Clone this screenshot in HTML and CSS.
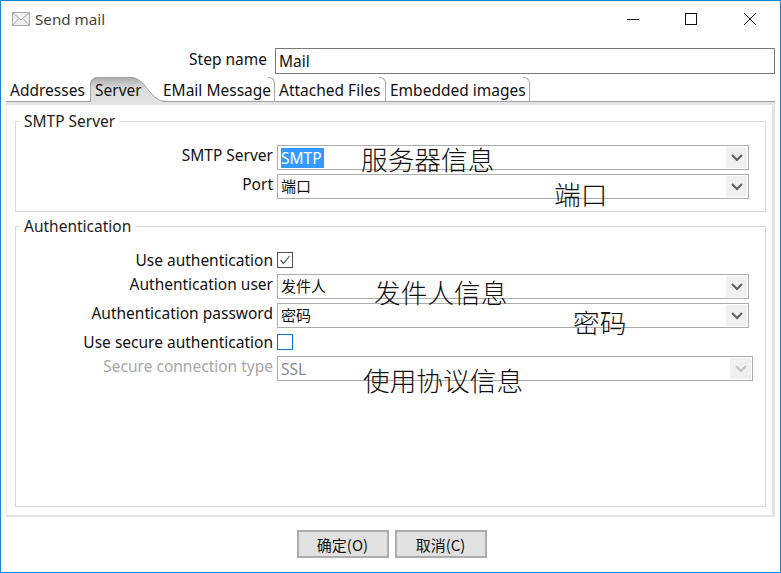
FILE: index.html
```html
<!DOCTYPE html>
<html lang="en">

<head>
    <meta charset="UTF-8">
    <title>Send mail</title>
    <link rel="stylesheet" href="styles.css">
</head>

<body>
    <div class="window">
        <div class="titlebar">
            <svg class="mail-icon" width="18" height="14" viewBox="0 0 18 14">
                <rect x="0.5" y="0.5" width="17" height="13" fill="#f0f0f0" stroke="#a8a8a8" />
                <path d="M1 1l8 7 8-7M1 13l6-6.5M17 13l-6-6.5" fill="none" stroke="#a8a8a8" />
            </svg>
            <span class="title-text">Send mail</span>
            <div class="controls">
                <svg width="12" height="12" viewBox="0 0 12 12">
                    <path d="M0 6.5h12" stroke="#111" />
                </svg>
                <svg width="12" height="12" viewBox="0 0 12 12">
                    <rect x="0.5" y="0.5" width="11" height="11" fill="none" stroke="#111" />
                </svg>
                <svg class="close-icon" width="12" height="12" viewBox="0 0 12 12">
                    <path d="M0 0l12 12M12 0l-12 12" stroke="#111" />
                </svg>
            </div>
        </div>

        <div class="step-row">
            <span class="step-label">Step name</span>
            <div class="step-input">Mail</div>
        </div>

        <div class="tabs">
            <span class="tab tab-first">Addresses</span>
            <span class="tab tab-active">
                <svg class="tab-shape" width="80" height="26" viewBox="0 0 80 26">
                    <defs>
                        <linearGradient id="tabfill" x1="0" y1="0" x2="0" y2="1">
                            <stop offset="0" stop-color="#a9a9a9" />
                            <stop offset="0.45" stop-color="#dcdcdc" />
                            <stop offset="1" stop-color="#e3e3e3" />
                        </linearGradient>
                    </defs>
                    <path d="M0 26V9C0 3 3 0 9 0H40C50 0 54 8 60 15C66 22 70 25 78 25V26Z" fill="url(#tabfill)" />
                    <path d="M0.5 25V9C0.5 3 3 0.5 9 0.5H40C50 0.5 54 8 60 15C66 22 70 24.5 78 24.5" fill="none" stroke="#a0a0a0" />
                </svg>
                <span class="tab-label">Server</span>
            </span>
            <span class="tab tab-curved tab-email">EMail Message</span>
            <span class="tab tab-curved tab-attached">Attached Files</span>
            <span class="tab tab-curved tab-embedded">Embedded images</span>
        </div>

        <div class="panel">
            <fieldset class="group group-smtp">
                <legend>SMTP Server</legend>
                <div class="row">
                    <label>SMTP Server</label>
                    <div class="combo">
                        <span class="selected">SMTP</span>
                        <span class="arrow"><svg width="12" height="8" viewBox="0 0 12 8"><path d="M1 1l5 5 5-5" fill="none" stroke="#606060" stroke-width="2" /></svg></span>
                    </div>
                </div>
                <div class="row">
                    <label>Port</label>
                    <div class="combo">
                        <span class="value-cjk">端口</span>
                        <span class="arrow"><svg width="12" height="8" viewBox="0 0 12 8"><path d="M1 1l5 5 5-5" fill="none" stroke="#606060" stroke-width="2" /></svg></span>
                    </div>
                </div>
            </fieldset>

            <fieldset class="group group-auth">
                <legend>Authentication</legend>
                <div class="row check-row">
                    <label>Use authentication</label>
                    <span class="checkbox">
                        <svg width="14" height="14" viewBox="0 0 14 14"><path d="M2.5 7l3 3.5 6-7.5" fill="none" stroke="#555" stroke-width="1.2" /></svg>
                    </span>
                </div>
                <div class="row">
                    <label>Authentication user</label>
                    <div class="combo">
                        <span class="value-cjk">发件人</span>
                        <span class="arrow"><svg width="12" height="8" viewBox="0 0 12 8"><path d="M1 1l5 5 5-5" fill="none" stroke="#606060" stroke-width="2" /></svg></span>
                    </div>
                </div>
                <div class="row">
                    <label>Authentication password</label>
                    <div class="combo">
                        <span class="value-cjk">密码</span>
                        <span class="arrow"><svg width="12" height="8" viewBox="0 0 12 8"><path d="M1 1l5 5 5-5" fill="none" stroke="#606060" stroke-width="2" /></svg></span>
                    </div>
                </div>
                <div class="row check-row">
                    <label>Use secure authentication</label>
                    <span class="checkbox checkbox-focus"></span>
                </div>
                <div class="row row-disabled">
                    <label>Secure connection type</label>
                    <div class="combo">
                        <span>SSL</span>
                        <span class="arrow"><svg width="12" height="8" viewBox="0 0 12 8"><path d="M1 1l5 5 5-5" fill="none" stroke="#c4c4c4" stroke-width="2" /></svg></span>
                    </div>
                </div>
            </fieldset>
        </div>

        <div class="buttons">
            <button type="button">确定(O)</button>
            <button type="button">取消(C)</button>
        </div>

        <!-- notes typed over the screenshot -->
        <span class="note note-server">服务器信息</span>
        <span class="note note-port">端口</span>
        <span class="note note-user">发件人信息</span>
        <span class="note note-password">密码</span>
        <span class="note note-protocol">使用协议信息</span>
    </div>
</body>

</html>
```

FILE: styles.css
```css
* {
    box-sizing: border-box;
}

body {
    margin: 0;
    background-color: #ffffff;
    font-family: "Noto Sans", "Noto Sans CJK SC", sans-serif;
    font-size: 15.5px;
    color: #111111;
}

.window {
    position: relative;
    width: 781px;
    height: 573px;
    border: 1px solid #1883d7;
    background-color: #ffffff;
    overflow: hidden;
}

/* title bar */
.titlebar {
    display: flex;
    align-items: center;
    height: 36px;
    padding-left: 11px;
}

.mail-icon {
    margin-right: 5px;
}

.title-text {
    color: #444444;
    line-height: 20px;
    font-size: 15.2px;
}

.controls {
    display: flex;
    align-items: center;
    gap: 46px;
    margin-left: auto;
    margin-right: 24px;
    margin-top: -1px;
}

.close-icon {
    margin-left: 1px;
}

/* step name */
.step-row {
    display: flex;
    align-items: center;
    gap: 8px;
    height: 27px;
    margin-top: 10px;
}

.step-label {
    width: 266px;
    text-align: right;
    line-height: 20px;
    margin-top: -3px;
}

.step-input {
    width: 500px;
    height: 26px;
    border: 1px solid #7a7a7a;
    padding: 2px 3px;
    line-height: 20px;
}

/* tabs */
.tabs {
    display: flex;
    height: 25px;
    margin-top: 3px;
    margin-left: 5px;
    margin-right: 5px;
    border-bottom: 1px solid #a0a0a0;
}

.tab {
    position: relative;
    height: 24px;
    line-height: 26px;
    white-space: nowrap;
}

/* thin arc at the top right of the plain tabs */
.tab-curved::after {
    content: "";
    position: absolute;
    top: 0;
    right: 0;
    bottom: 0;
    width: 6px;
    border-top: 1px solid #a8a8a8;
    border-right: 1px solid #a8a8a8;
    border-top-right-radius: 6px;
}

.tab-first {
    width: 85px;
    padding-left: 4px;
}

.tab-active {
    width: 72px;
    padding-left: 4px;
}

.tab-shape {
    position: absolute;
    left: -1px;
    top: 0;
}

.tab-label {
    position: relative;
}

.tab-email {
    width: 112px;
}

.tab-attached {
    width: 111px;
    padding-left: 4px;
}

.tab-embedded {
    width: 144px;
    padding-left: 4px;
}

/* main panel */
.panel {
    height: 415px;
    margin-left: 5px;
    margin-right: 5px;
    border: solid #e3e3e3;
    border-width: 3px 3px 2px 1px;
    padding: 6px 6px 0 8px;
}

.group {
    margin: 0;
    padding: 0;
    border: 1px solid #d9d9d9;
    min-width: 0;
}

.group legend {
    margin-left: 4px;
    padding: 0 4px;
    line-height: 20px;
    color: #222222;
}

.group-smtp {
    height: 101px;
    padding-top: 14px;
}

.group-auth {
    height: 291px;
    margin-top: 4px;
    padding-top: 16px;
}

.row {
    display: flex;
    align-items: center;
    gap: 4px;
    height: 25px;
    margin-top: 4px;
    margin-right: 16px;
}

.row:first-of-type {
    margin-top: 0;
}

.check-row {
    height: 16px;
    margin-top: 6px;
    margin-bottom: 6px;
}

.row-disabled {
    margin-top: 6px;
    margin-right: 12px;
    color: #a8a8a8;
}

.row label {
    flex: 0 0 257px;
    text-align: right;
    line-height: 20px;
    margin-top: -5px;
}

.check-row label {
    margin-top: 0;
}

.combo {
    flex: 1;
    display: flex;
    align-items: center;
    justify-content: space-between;
    height: 25px;
    border: 1px solid #adadad;
    padding: 1px 1px 1px 3px;
    line-height: 20px;
}

.row-disabled .combo {
    color: #8a8a8a;
}

.value-cjk {
    font-size: 15px;
    margin-bottom: 2px;
}

.selected {
    background-color: #3399ff;
    color: #ffffff;
    width: 43px;
}

.arrow {
    display: flex;
    align-items: center;
    justify-content: center;
    width: 21px;
    height: 21px;
    background-color: #f0f0f0;
}

.checkbox {
    display: flex;
    width: 16px;
    height: 16px;
    border: 1px solid #4d4d4d;
    align-items: center;
    justify-content: center;
}

.checkbox-focus {
    border-color: #0078d7;
}

/* bottom buttons */
.buttons {
    display: flex;
    justify-content: center;
    gap: 6px;
    margin-top: 13px;
    padding-left: 2px;
}

.buttons button {
    width: 92px;
    height: 28px;
    border: 2px solid #adadad;
    background-color: #e1e1e1;
    font-family: "Noto Sans CJK SC", "Noto Sans", sans-serif;
    font-size: 15px;
    color: #111111;
    padding: 0;
}

/* overlay notes */
.note {
    position: absolute;
    font-family: "Noto Sans CJK SC", sans-serif;
    font-size: 26.7px;
    font-weight: 300;
    line-height: 30px;
    color: #111111;
    white-space: nowrap;
}

.note-server {
    left: 360px;
    top: 143px;
}

.note-port {
    left: 553px;
    top: 178px;
}

.note-user {
    left: 373px;
    top: 276px;
}

.note-password {
    left: 572px;
    top: 306px;
}

.note-protocol {
    left: 362px;
    top: 364px;
}
```
